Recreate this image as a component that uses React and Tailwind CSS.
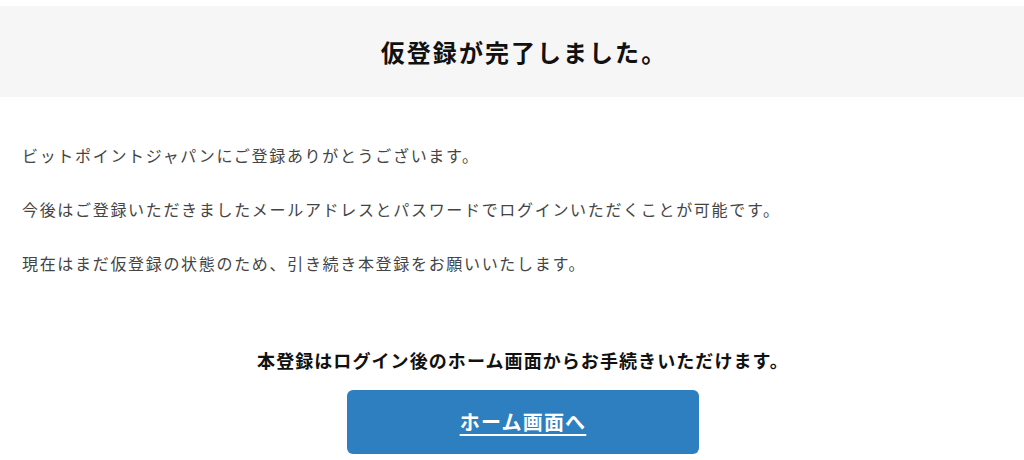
import React from 'react';

const jp = { fontFamily: '"Noto Sans CJK JP", "Noto Sans", sans-serif' };

const App = () => {
  return (
    <div className="w-[1024px] h-[460px] bg-white overflow-hidden pt-[6px]" style={jp}>
      <div className="h-[91px] bg-[#f6f6f6] flex items-center justify-center pl-[24px]">
        <h1 className="text-[24px] leading-none font-bold text-[#111] tracking-[0.085em]">
          仮登録が完了しました。
        </h1>
      </div>

      <div className="px-[22px] pt-[46px] text-[16px] leading-[24px] text-[#444] font-normal tracking-[0.105em]">
        <p className="mb-[30px]">ビットポイントジャパンにご登録ありがとうございます。</p>
        <p className="mb-[30px]">今後はご登録いただきましたメールアドレスとパスワードでログインいただくことが可能です。</p>
        <p>現在はまだ仮登録の状態のため、引き続き本登録をお願いいたします。</p>
      </div>

      <div className="flex flex-col items-center mt-[72px] pl-[22px]">
        <p className="text-[18px] leading-[27px] font-bold text-[#111] tracking-[0.06em]">
          本登録はログイン後のホーム画面からお手続きいただけます。
        </p>
        <a
          href="#"
          className="mt-[16px] w-[352px] h-[64px] rounded-[6px] bg-[#2e7fc0] flex items-center justify-center text-white text-[20px] font-bold underline underline-offset-[4px] tracking-[0.06em]"
        >
          ホーム画面へ
        </a>
      </div>
    </div>
  );
};

export default App;
